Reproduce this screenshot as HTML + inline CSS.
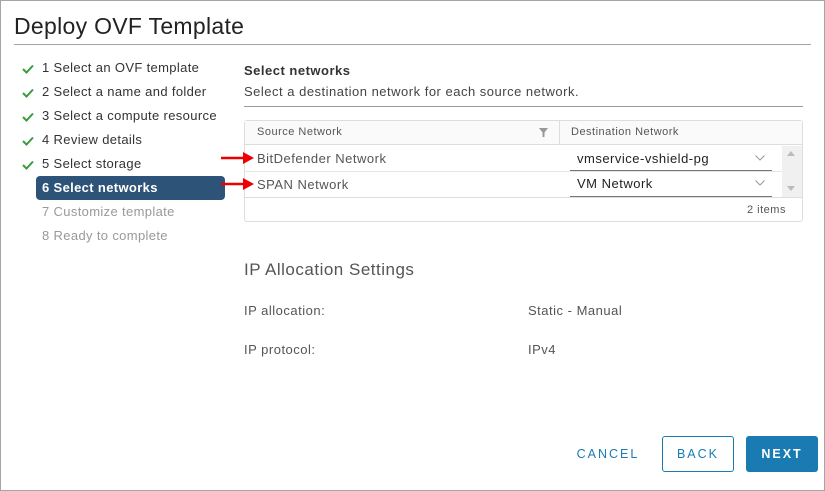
<!DOCTYPE html><html><head><style>
*{margin:0;padding:0;box-sizing:border-box}
body{width:825px;height:491px;background:#fff;font-family:"Liberation Sans",sans-serif;color:#333;position:relative;overflow:hidden}
.frame{position:absolute;left:0;top:0;width:825px;height:491px;border:1px solid #a5a5a5}
.a{position:absolute;white-space:nowrap}
.nav{font-size:13px;color:#333;letter-spacing:0.35px}
.chk{position:absolute;left:22px;width:12px;height:10px}
.btn{position:absolute;top:436px;height:36px;border-radius:3px;font-size:12.5px;letter-spacing:2px;text-align:center;line-height:36px}
.t{letter-spacing:0.5px}
</style></head><body>
<div class="frame"></div>
<div class="a" style="left:14px;top:13px;font-size:23px;color:#222;letter-spacing:0.3px">Deploy OVF Template</div>
<div class="a" style="left:14px;top:44px;width:797px;height:1px;background:#a5a5a5"></div>

<svg class="chk" style="top:64px" viewBox="0 0 12 10"><path d="M1 5l3.5 3.5L11 1.5" stroke="#3c9b3c" stroke-width="2" fill="none"/></svg>
<svg class="chk" style="top:88px" viewBox="0 0 12 10"><path d="M1 5l3.5 3.5L11 1.5" stroke="#3c9b3c" stroke-width="2" fill="none"/></svg>
<svg class="chk" style="top:112px" viewBox="0 0 12 10"><path d="M1 5l3.5 3.5L11 1.5" stroke="#3c9b3c" stroke-width="2" fill="none"/></svg>
<svg class="chk" style="top:136px" viewBox="0 0 12 10"><path d="M1 5l3.5 3.5L11 1.5" stroke="#3c9b3c" stroke-width="2" fill="none"/></svg>
<svg class="chk" style="top:160px" viewBox="0 0 12 10"><path d="M1 5l3.5 3.5L11 1.5" stroke="#3c9b3c" stroke-width="2" fill="none"/></svg>
<div class="a nav" style="left:42px;top:60px">1 Select an OVF template</div>
<div class="a nav" style="left:42px;top:84px">2 Select a name and folder</div>
<div class="a nav" style="left:42px;top:108px">3 Select a compute resource</div>
<div class="a nav" style="left:42px;top:132px">4 Review details</div>
<div class="a nav" style="left:42px;top:156px">5 Select storage</div>
<div class="a" style="left:36px;top:176px;width:189px;height:24px;background:#2e5378;border-radius:4px"></div>
<div class="a nav" style="left:42px;top:180px;color:#fff;font-weight:bold">6 Select networks</div>
<div class="a nav" style="left:42px;top:204px;color:#999">7 Customize template</div>
<div class="a nav" style="left:42px;top:228px;color:#999">8 Ready to complete</div>

<div class="a t" style="left:244px;top:63px;font-size:13px;font-weight:bold;color:#333">Select networks</div>
<div class="a t" style="left:244px;top:84px;font-size:13px;color:#444">Select a destination network for each source network.</div>
<div class="a" style="left:244px;top:106px;width:559px;height:1px;background:#999"></div>

<div class="a" style="left:244px;top:120px;width:559px;height:102px;border:1px solid #ddd;border-radius:3px"></div>
<div class="a" style="left:245px;top:121px;width:557px;height:24px;background:#fafafa;border-bottom:1px solid #ddd"></div>
<div class="a" style="left:559px;top:121px;width:1px;height:24px;background:#ddd"></div>
<div class="a t" style="left:257px;top:126px;font-size:11px;color:#555">Source Network</div>
<svg class="a" style="left:539px;top:128px" width="9" height="9" viewBox="0 0 9 9"><path d="M0 0h9L5.5 4.5V9h-2V4.5z" fill="#999"/></svg>
<div class="a t" style="left:571px;top:126px;font-size:11px;color:#555">Destination Network</div>
<div class="a" style="left:245px;top:171px;width:537px;height:1px;background:#e5e5e5"></div>
<div class="a" style="left:245px;top:197px;width:557px;height:1px;background:#ddd"></div>
<div class="a" style="left:782px;top:146px;width:20px;height:51px;background:#f0f0f0"></div>
<svg class="a" style="left:787px;top:151px" width="8" height="5"><path d="M0 5L4 0L8 5z" fill="#bbb"/></svg>
<svg class="a" style="left:787px;top:186px" width="8" height="5"><path d="M0 0L4 5L8 0z" fill="#bbb"/></svg>
<div class="a t" style="left:257px;top:151px;font-size:13px;color:#555">BitDefender Network</div>
<div class="a t" style="left:257px;top:177px;font-size:13px;color:#555">SPAN Network</div>
<div class="a t" style="left:577px;top:151px;font-size:13px;color:#222">vmservice-vshield-pg</div>
<div class="a t" style="left:577px;top:176px;font-size:13px;color:#222">VM Network</div>
<div class="a" style="left:570px;top:170px;width:202px;height:1px;background:#777"></div>
<div class="a" style="left:570px;top:196px;width:202px;height:1px;background:#777"></div>
<svg class="a" style="left:755px;top:155px" width="10" height="6"><path d="M0.5 0.5L5 5L9.5 0.5" stroke="#999" fill="none"/></svg>
<svg class="a" style="left:755px;top:180px" width="10" height="6"><path d="M0.5 0.5L5 5L9.5 0.5" stroke="#999" fill="none"/></svg>
<div class="a t" style="left:747px;top:204px;font-size:11px;color:#555">2 items</div>

<svg class="a" style="left:221px;top:151px" width="36" height="14"><path d="M0 7H24" stroke="#e00" stroke-width="2.5"/><path d="M22 1L33 7L22 13z" fill="#e00"/></svg>
<svg class="a" style="left:221px;top:177px" width="36" height="14"><path d="M0 7H24" stroke="#e00" stroke-width="2.5"/><path d="M22 1L33 7L22 13z" fill="#e00"/></svg>

<div class="a" style="left:244px;top:260px;font-size:17px;color:#555;letter-spacing:0.5px">IP Allocation Settings</div>
<div class="a t" style="left:244px;top:303px;font-size:13px;color:#555">IP allocation:</div>
<div class="a t" style="left:528px;top:303px;font-size:13px;color:#555">Static - Manual</div>
<div class="a t" style="left:244px;top:342px;font-size:13px;color:#555">IP protocol:</div>
<div class="a t" style="left:528px;top:342px;font-size:13px;color:#555">IPv4</div>

<div class="btn" style="left:570px;width:76px;color:#1a7bb3">CANCEL</div>
<div class="btn" style="left:662px;width:72px;border:1px solid #1a7bb3;color:#1a7bb3;line-height:34px">BACK</div>
<div class="btn" style="left:746px;width:72px;background:#1a7bb3;color:#fff;font-weight:bold">NEXT</div>
</body></html>
